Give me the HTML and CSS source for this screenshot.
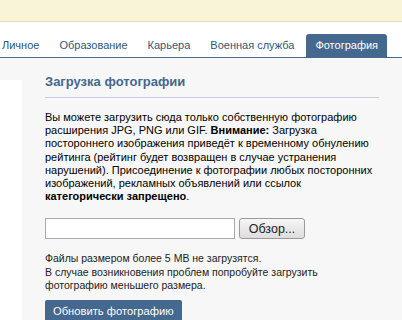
FILE: index.html
```html
<!DOCTYPE html>
<html lang="ru">
  <head>
    <meta charset="UTF-8" />
    <title>Фотография</title>
    <link rel="stylesheet" href="styles.css">
  </head>
  <body>
    <div class="top-bar"></div>

    <div class="tabs">
      <a class="tab">Личное</a>
      <a class="tab">Образование</a>
      <a class="tab">Карьера</a>
      <a class="tab">Военная служба</a>
      <a class="tab active">Фотография</a>
    </div>

    <div class="page">
      <div class="side"></div>
      <div class="content">
        <h2 class="section-title">Загрузка фотографии</h2>

        <p class="info">
          Вы можете загрузить сюда только собственную фотографию<br>
          расширения JPG, PNG или GIF. <b>Внимание:</b> Загрузка<br>
          постороннего изображения приведёт к временному обнулению<br>
          рейтинга (рейтинг будет возвращен в случае устранения<br>
          нарушений). Присоединение к фотографии любых посторонних<br>
          изображений, рекламных объявлений или ссылок<br>
          <b>категорически запрещено</b>.
        </p>

        <div class="file-row">
          <input type="text" class="file-path" />
          <button type="button" class="browse-btn">Обзор...</button>
        </div>

        <p class="note">
          Файлы размером более 5 MB не загрузятся.<br>
          В случае возникновения проблем попробуйте загрузить<br>
          фотографию меньшего размера.
        </p>

        <button type="button" class="upload-btn">Обновить фотографию</button>
      </div>
    </div>
  </body>
</html>
```

FILE: styles.css
```css
* {
  box-sizing: border-box;
}

body {
  margin: 0;
  font-family: "Liberation Sans", Tahoma, sans-serif;
  font-size: 11px;
  color: #000;
  background: #fff;
  overflow: hidden;
}

.top-bar {
  height: 22px;
  background: #f9f4d8;
  border-bottom: 1px solid #e4dcb4;
}

.tabs {
  display: flex;
  align-items: flex-end;
  height: 36px;
  padding-left: 2px;
  white-space: nowrap;
  border-bottom: 1px solid #45688e;
}

.tab {
  padding: 6px 0 6px;
  margin-right: 20px;
  font-size: 11px;
  line-height: 11px;
  color: #2b587a;
  border-radius: 3px 3px 0 0;
}

.tab.active {
  margin-left: -8px;
  padding: 6px 9px 6px;
  background: #45688e;
  color: #fff;
}

.page {
  display: flex;
  background: #f7f7f7;
  min-height: 300px;
}

.side {
  width: 22px;
  margin-top: 22px;
  background: #fff;
}

.content {
  padding: 16px 0 0 23px;
  white-space: nowrap;
}

.section-title {
  width: 334px;
  margin: 0;
  padding: 0 0 8px;
  font-size: 13px;
  color: #45688e;
  border-bottom: 1px solid #c5d0dc;
}

.info {
  margin: 13px 0 0;
  font-size: 11px;
  line-height: 13.2px;
}

.file-row {
  display: flex;
  gap: 4px;
  margin-top: 15px;
}

.file-path {
  width: 190px;
  height: 21px;
  border: 1px solid #aaa;
  background: #fff;
}

.browse-btn {
  width: 66px;
  height: 21px;
  padding: 0;
  font-family: inherit;
  font-size: 12.5px;
  color: #222;
  border: 1px solid #9a9a9a;
  border-radius: 3px;
  background: linear-gradient(#f6f6f6, #dddddd);
}

.note {
  margin: 13px 0 0;
  font-size: 10.5px;
  line-height: 13.3px;
  color: #222;
}

.upload-btn {
  margin-top: 8px;
  padding: 5px 8px 6px;
  font-family: inherit;
  font-size: 11.2px;
  color: #fff;
  background: #45688e;
  border: none;
  border-radius: 2px;
}
```
